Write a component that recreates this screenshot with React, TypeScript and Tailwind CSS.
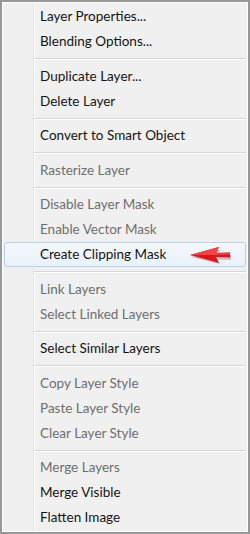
import React from "react"

type Entry =
  | { kind: "item"; label: string; disabled?: boolean; active?: boolean }
  | { kind: "sep"; h: string }

const entries: Entry[] = [
  { kind: "item", label: "Layer Properties..." },
  { kind: "item", label: "Blending Options..." },
  { kind: "sep", h: "h-[10px]" },
  { kind: "item", label: "Duplicate Layer..." },
  { kind: "item", label: "Delete Layer" },
  { kind: "sep", h: "h-[9px]" },
  { kind: "item", label: "Convert to Smart Object" },
  { kind: "sep", h: "h-[10px]" },
  { kind: "item", label: "Rasterize Layer", disabled: true },
  { kind: "sep", h: "h-[9px]" },
  { kind: "item", label: "Disable Layer Mask", disabled: true },
  { kind: "item", label: "Enable Vector Mask", disabled: true },
  { kind: "item", label: "Create Clipping Mask", active: true },
  { kind: "sep", h: "h-[10px]" },
  { kind: "item", label: "Link Layers", disabled: true },
  { kind: "item", label: "Select Linked Layers", disabled: true },
  { kind: "sep", h: "h-[9px]" },
  { kind: "item", label: "Select Similar Layers" },
  { kind: "sep", h: "h-[10px]" },
  { kind: "item", label: "Copy Layer Style", disabled: true },
  { kind: "item", label: "Paste Layer Style", disabled: true },
  { kind: "item", label: "Clear Layer Style", disabled: true },
  { kind: "sep", h: "h-[9px]" },
  { kind: "item", label: "Merge Layers", disabled: true },
  { kind: "item", label: "Merge Visible" },
  { kind: "item", label: "Flatten Image" },
]

// red pointer arrow drawn next to the active item
function Arrow() {
  return (
    <svg width="44" height="20" viewBox="0 0 44 20" className="shrink-0">
      <path d="M2 12 L31 5 L28 10.5 L42 10 L42 15 L28 14.5 L31 19 Z" fill="#7a1010" opacity="0.25" />
      <path d="M1 10 L30 2 L27 8 L41 7.5 L41 12.5 L27 12 L30 18 Z" fill="#d9161a" />
      <path d="M1 10 L30 2 L27 8 L41 7.5 L41 9.5 L27 10 Z" fill="#f24245" />
    </svg>
  )
}

export default function App() {
  return (
    <div className="w-[250px] h-[534px] border-2 border-[#989898] bg-[#f0f0f0] font-['Lato',sans-serif] text-[13.5px]">
      <div className="h-full border border-white py-[1px] bg-[linear-gradient(to_right,#f0f0f0_30px,#e2e3e3_30px,#e2e3e3_31px,#ffffff_31px,#ffffff_32px,#f0f0f0_32px)]">
        {entries.map((e, i) =>
          e.kind === "sep" ? (
            <div key={i} className={`${e.h} flex flex-col justify-center ml-[31px] mr-[1px]`}>
              <div className="h-px bg-[#d7d7d7]" />
              <div className="h-px bg-white" />
            </div>
          ) : e.active ? (
            <div
              key={i}
              className="h-[25px] mx-[1px] flex items-center justify-between pl-[35px] pr-[12px] rounded-[3px] border border-[#b9d1ea] bg-[linear-gradient(to_bottom,#f4f8fc,#e9f1fa)] text-[#141414]"
            >
              <span>{e.label}</span>
              <Arrow />
            </div>
          ) : (
            <div
              key={i}
              className={`h-[25px] flex items-center pl-[37px] ${e.disabled ? "text-[#6e6e6e]" : "text-[#141414]"}`}
            >
              {e.label}
            </div>
          )
        )}
      </div>
    </div>
  )
}
